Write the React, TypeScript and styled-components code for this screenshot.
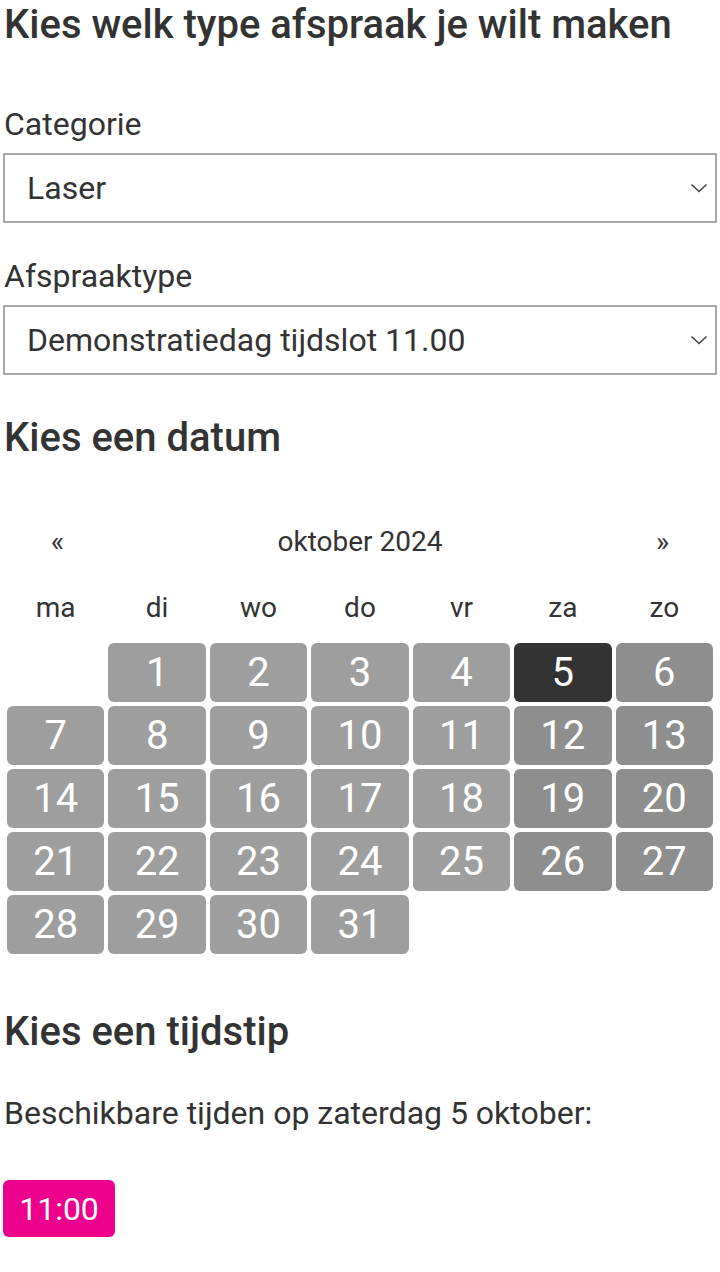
import React from "react";
import styled, { createGlobalStyle } from "styled-components";

const Global = createGlobalStyle`
  html, body { margin: 0; padding: 0; background: #fff; }
  body { font-family: Roboto, "Noto Sans", Arial, sans-serif; color: #333; }
`;

const Page = styled.div`
  padding: 0 3px 40px 3px;
  display: flex;
  flex-direction: column;
`;

const Heading = styled.h2<{ $mt: number; $mb: number }>`
  margin: ${(p) => p.$mt}px 0 ${(p) => p.$mb}px 1px;
  font-size: 40px;
  line-height: 48px;
  font-weight: 500;
  color: #333;
`;

const Label = styled.label`
  display: block;
  font-size: 32px;
  line-height: 40px;
  margin: 0 0 9px 1px;
  color: #333;
`;

const Field = styled.div`
  display: flex;
  flex-direction: column;
  margin-bottom: 33px;
`;

const SelectBox = styled.div`
  height: 70px;
  box-sizing: border-box;
  border: 2px solid #a9a9a9;
  display: flex;
  align-items: center;
  justify-content: space-between;
  padding: 0 7px 0 22px;
  font-size: 32px;
  color: #333;
`;

const Chevron = () => (
  <svg width="18" height="12" viewBox="0 0 18 12">
    <path d="M1.5 2.5 L9 9.5 L16.5 2.5" fill="none" stroke="#444" strokeWidth="1.6" />
  </svg>
);

const Calendar = styled.div`
  margin-top: 59px;
  display: grid;
  grid-template-columns: repeat(7, 1fr);
  column-gap: 4px;
  row-gap: 4px;
  padding: 0 4px;
`;

const NavRow = styled.div`
  grid-column: 1 / -1;
  display: grid;
  grid-template-columns: 1fr 5fr 1fr;
  height: 40px;
  align-items: center;
  font-size: 28px;
  color: #333;
  text-align: center;
  margin-bottom: 25px;
`;

const Weekday = styled.div`
  text-align: center;
  font-size: 28px;
  height: 36px;
  line-height: 36px;
  color: #333;
  margin-bottom: 13px;
`;

const Day = styled.div<{ $variant: "weekday" | "weekend" | "selected" | "empty" }>`
  height: 59px;
  border-radius: 6px;
  display: flex;
  align-items: center;
  justify-content: center;
  font-size: 40px;
  color: #fff;
  background: ${(p) =>
    p.$variant === "selected"
      ? "#333333"
      : p.$variant === "weekend"
      ? "#8e8e8e"
      : p.$variant === "weekday"
      ? "#9e9e9e"
      : "transparent"};
`;

const Text = styled.p`
  margin: 0 0 47px 1px;
  font-size: 32px;
  line-height: 40px;
  color: #333;
`;

const TimeButton = styled.button`
  align-self: flex-start;
  width: 112px;
  height: 57px;
  border: none;
  border-radius: 6px;
  background: #ec008c;
  color: #fff;
  font-family: inherit;
  font-size: 32px;
  padding: 0;
`;

const weekdays = ["ma", "di", "wo", "do", "vr", "za", "zo"];

export default function App() {
  const cells: (number | null)[] = [null];
  for (let d = 1; d <= 31; d++) cells.push(d);
  return (
    <Page>
      <Global />
      <Heading $mt={1} $mb={55}>Kies welk type afspraak je wilt maken</Heading>
      <Field>
        <Label>Categorie</Label>
        <SelectBox>
          <span>Laser</span>
          <Chevron />
        </SelectBox>
      </Field>
      <Field>
        <Label>Afspraaktype</Label>
        <SelectBox>
          <span>Demonstratiedag tijdslot 11.00</span>
          <Chevron />
        </SelectBox>
      </Field>
      <Heading $mt={6} $mb={0}>Kies een datum</Heading>
      <Calendar>
        <NavRow>
          <span>«</span>
          <span>oktober 2024</span>
          <span>»</span>
        </NavRow>
        {weekdays.map((w) => (
          <Weekday key={w}>{w}</Weekday>
        ))}
        {cells.map((n, i) => {
          const col = i % 7;
          const variant =
            n === null ? "empty" : n === 5 ? "selected" : col >= 5 ? "weekend" : "weekday";
          return (
            <Day key={i} $variant={variant}>
              {n ?? ""}
            </Day>
          );
        })}
      </Calendar>
      <Heading $mt={54} $mb={37}>Kies een tijdstip</Heading>
      <Text>Beschikbare tijden op zaterdag 5 oktober:</Text>
      <TimeButton>11:00</TimeButton>
    </Page>
  );
}
